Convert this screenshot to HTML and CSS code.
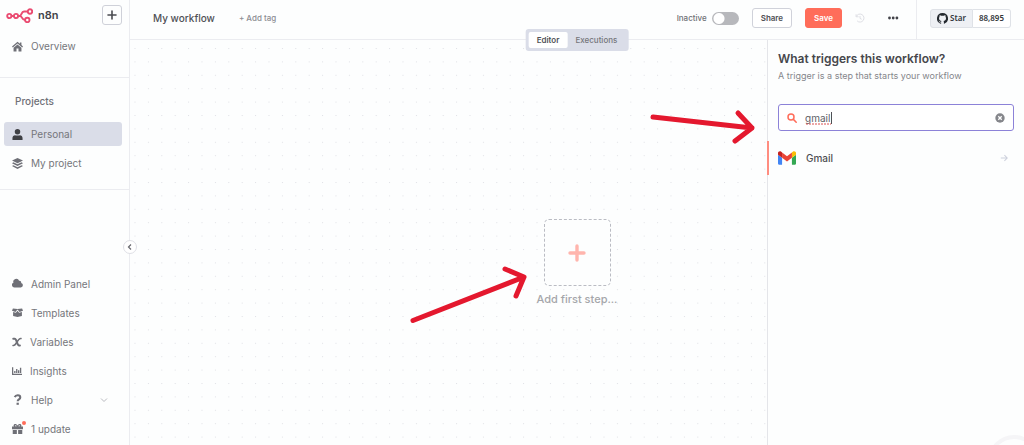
FILE: index.html
```html
<!DOCTYPE html>
<html lang="en">
<head>
<meta charset="utf-8">
<title>My workflow - n8n</title>
<link rel="stylesheet" href="styles.css">
</head>
<body>
<div class="app">
  <aside class="sidebar">
    <div class="brand">
      <svg class="brand-logo" viewBox="0 0 27 15" fill="none" stroke="#ea4b71" stroke-width="1.9" aria-hidden="true">
        <circle cx="3.300" cy="8" r="2.100"/><circle cx="10" cy="8" r="2.100"/><circle cx="24" cy="3.500" r="2.200"/><circle cx="21.300" cy="12" r="2.200"/>
        <path d="M5.300 8h2.700M12 8h1.600c2.400 0 1.400-4.500 4.400-4.500h3.800M14 8c2.400 0 1.400 4 5.100 4"/>
      </svg>
      <span class="brand-name">n8n</span>
      <button class="add-button" type="button" aria-label="Create"><svg viewBox="0 0 10 10" stroke="#4a4b50" stroke-width="1.6" stroke-linecap="round"><path d="M5 1v8M1 5h8"/></svg></button>
    </div>
    <nav class="nav nav-home">
      <a class="nav-item" href="#"><svg class="icon" viewBox="0 0 12 12" fill="#6f7077"><path d="M6 .8 0 5.900l.9 1.100L6 2.700 11.100 7l.9-1.100L10.300 4.400V1.500H8.600V3zM1.700 7.400 6 3.800l4.300 3.600v4.100H7.100V8.300H4.900v3.200H1.700z"/></svg>Overview</a>
    </nav>
    <nav class="nav nav-projects">
      <h2 class="nav-title">Projects</h2>
      <a class="nav-item active" href="#"><svg class="icon" viewBox="0 0 12 12" fill="#3f4045"><circle cx="6" cy="3.100" r="3"/><path d="M.5 12V9.700c0-1.700 1.200-3 3-3 .8.600 4.200.600 5 0 1.800 0 3 1.300 3 3V12z"/></svg>Personal</a>
      <a class="nav-item" href="#"><svg class="icon" viewBox="0 0 12 12" fill="#6f7077"><path d="M6 0l6 2.800-6 2.800-6-2.800zM1.500 4.700 6 6.800l4.500-2.100L12 5.600 6 8.600 0 5.600zM1.500 7.900 6 10l4.500-2.100 1.500.9-6 3.100-6-3.100z"/></svg>My project</a>
    </nav>
    <nav class="nav nav-bottom">
      <a class="nav-item" href="#"><svg class="icon" viewBox="0 0 12 12" fill="#6f7077"><path d="M2.600 10.300a2.700 2.700 0 0 1-1-5.200A3.200 3.200 0 0 1 7.700 3a2.100 2.100 0 0 1 2.300 2.400 2.500 2.500 0 0 1-.3 4.900z"/></svg>Admin Panel</a>
      <a class="nav-item" href="#"><svg class="icon" viewBox="0 0 12 12" fill="#6f7077"><path d="M1 1.500 6 2.200l5-.7 1 2.600-3.700 1.300L6 2.600 3.700 5.400 0 4.100zM1.200 5.400l3 1L6 4.200l1.800 2.200 3-1v4.300L6 11 1.200 9.700z"/></svg>Templates</a>
      <a class="nav-item" href="#"><svg class="icon narrow" viewBox="0 0 12 12" fill="none" stroke="#6f7077" stroke-linecap="round"><path d="M1.500 2h1.700c2.700 0 2.700 8.300 5.300 8.300h1" stroke-width="2.400"/><path d="M10.800 1.900C7 .6 5 11.400 1.200 10.100" stroke-width="1.800"/></svg>Variables</a>
      <a class="nav-item" href="#"><svg class="icon narrow" viewBox="0 0 12 12" fill="#6f7077"><path d="M0 1.500h1.500v7.700H12v1.500H0zM2.600 6h1.600v2.400H2.600zM4.900 3.600h1.600v4.800H4.900zM7.200 5h1.600v3.400H7.200zM9.500 2.200h1.600v6.200H9.500z"/></svg>Insights</a>
      <a class="nav-item" href="#"><svg class="icon" viewBox="0 0 12 12" fill="none" stroke="#6f7077" stroke-width="2.300"><path d="M3 3.400C4.100.6 9 .7 9 3.700c0 2.300-2.800 1.900-2.800 4.200"/><path d="M6.200 9.500v2.300" stroke-width="2.500"/></svg>Help<svg class="chevron" viewBox="0 0 8 8" fill="none" stroke="#b9bac0"><path d="m1 2.500 3 3 3-3"/></svg></a>
      <a class="nav-item" href="#"><span class="gift"><svg class="icon" viewBox="0 0 12 12" fill="#6f7077"><path fill-rule="evenodd" d="M0 3.800h2C.8 1.600 3.600-.6 6 2.700 8.400-.6 11.200 1.600 10 3.800h2v3H0zM3.200 3.500h2C4.600 2.300 3.300 1.600 3.200 3.500zM6.800 3.500h2C8.700 1.600 7.400 2.300 6.800 3.500zM.8 7.700h4.500V12H.8zM6.700 7.700h4.500V12H6.700z"/></svg><span class="badge"></span></span>1 update</a>
    </nav>
    <button class="collapse" type="button" aria-label="Collapse sidebar"><svg viewBox="0 0 8 8" fill="none" stroke="#66676d" stroke-width="1.200"><path d="M5 1.500 2.500 4 5 6.500"/></svg></button>
  </aside>

  <div class="workspace">
    <header class="topbar">
      <h1 class="workflow-name">My workflow</h1>
      <button class="add-tag" type="button">+ Add tag</button>
      <div class="actions">
        <label class="activation">Inactive<input class="switch" type="checkbox" role="switch"></label>
        <button class="button" type="button">Share</button>
        <button class="button primary" type="button">Save</button>
        <button class="icon-button history" type="button" aria-label="Workflow history"><svg viewBox="0 0 12 12" fill="none" stroke="#dedfe5" stroke-width="1.200"><path d="M1.300 1.500v3h3M1.500 4.300A4.800 4.800 0 1 1 2.600 9.500M6 3.500v3l2 1"/></svg></button>
        <button class="icon-button more" type="button" aria-label="More actions"><svg viewBox="0 0 12 12" fill="#424349"><circle cx="2.500" cy="6" r="1.400"/><circle cx="6.200" cy="6" r="1.400"/><circle cx="9.900" cy="6" r="1.400"/></svg></button>
      </div>
      <div class="github">
        <a class="star" href="#"><svg viewBox="0 0 16 16" fill="#24292f" aria-hidden="true"><path d="M8 0a8 8 0 0 0-2.530 15.590c.4.070.550-.170.550-.380v-1.490c-2.010.370-2.530-.490-2.690-.940-.090-.230-.480-.940-.820-1.130-.280-.150-.680-.520-.010-.530.630-.010 1.080.580 1.230.820.720 1.210 1.870.870 2.330.660.070-.520.280-.870.510-1.070-1.780-.200-3.640-.890-3.640-3.950 0-.870.310-1.590.820-2.150-.080-.200-.360-1.020.080-2.120 0 0 .670-.210 2.200.820a7.400 7.400 0 0 1 4 0c1.530-1.040 2.200-.820 2.200-.820.440 1.100.160 1.920.080 2.120.510.560.820 1.270.820 2.150 0 3.070-1.870 3.750-3.650 3.950.290.250.540.730.540 1.480v2.200c0 .210.150.460.550.380A8 8 0 0 0 8 0z"/></svg>Star</a>
        <a class="count" href="#">88,895</a>
      </div>
    </header>
    <div class="tabs">
      <button class="tab selected" type="button">Editor</button>
      <button class="tab" type="button">Executions</button>
    </div>
    <div class="stage">
      <main class="canvas">
        <svg class="grid" aria-hidden="true"><defs><pattern id="dots" width="20" height="20" patternUnits="userSpaceOnUse" patternTransform="translate(4.500 8) scale(.67)"><rect width="1.500" height="1.500" fill="#dfe0e5"/></pattern></defs><rect width="100%" height="100%" fill="url(#dots)"/></svg>
        <div class="first-step">
          <button class="step-box" type="button" aria-label="Add first step"><svg viewBox="0 0 18 18" stroke="#ffb5ad" stroke-width="3.400" stroke-linecap="round"><path d="M9 2v14M2 9h14"/></svg></button>
          <span class="step-label">Add first step...</span>
        </div>
      </main>
      <section class="panel">
        <h2 class="panel-title">What triggers this workflow?</h2>
        <p class="panel-text">A trigger is a step that starts your workflow</p>
        <div class="search">
          <svg viewBox="0 0 10 10" fill="none" stroke="#ff6d5a" stroke-width="1.500" stroke-linecap="round"><circle cx="4" cy="4" r="3"/><path d="m6.400 6.400 2.800 2.800"/></svg>
          <input class="search-input" type="text" value="gmail" aria-label="Search nodes">
          <svg class="squiggle" viewBox="0 0 25 2" stroke="#d95050" stroke-width="1" stroke-dasharray="2 1"><path d="M0 1h25"/></svg>
          <span class="caret"></span>
          <button class="clear" type="button" aria-label="Clear search"><svg viewBox="0 0 10 10"><circle cx="5" cy="5" r="4.700" fill="#85868b"/><path d="m3.300 3.300 3.400 3.400m0-3.400L3.300 6.700" stroke="#fff" stroke-width="1.300"/></svg></button>
        </div>
        <a class="result" href="#">
          <svg class="gmail" viewBox="52 42 88 66"><path fill="#4285f4" d="M58 108h14V74L52 59v43c0 3.300 2.700 6 6 6"/><path fill="#34a853" d="M120 108h14c3.300 0 6-2.700 6-6V59l-20 15"/><path fill="#fbbc04" d="M120 48v26l20-15v-8c0-7.400-8.500-11.600-14.400-7.200"/><path fill="#ea4335" d="M72 74V48l24 18 24-18v26L96 92"/><path fill="#c5221f" d="M52 51v8l20 15V48l-5.600-4.200C60.500 39.400 52 43.600 52 51"/></svg>
          <span>Gmail</span>
          <svg class="go" viewBox="0 0 10 10" fill="none" stroke="#ccd0dc" stroke-width="1.300"><path d="M1 5h8M5.500 1.500 9 5 5.500 8.500"/></svg>
        </a>
      </section>
      <span class="help-ring"></span>
    </div>
    <svg class="annotations" viewBox="130 0 894 445" fill="none" stroke="#e4182e" stroke-width="5" stroke-linecap="round" stroke-linejoin="round" aria-hidden="true">
      <path d="M653 117 752 128M738 113l14 15-17 13"/>
      <path d="M413 320.500 524 277M505 269l19 8-8 19"/>
    </svg>
  </div>
</div>
</body>
</html>
```
FILE: styles.css
```css
* { box-sizing: border-box; }
body { margin: 0; background: #fdfefe; color: #505156; font-family: Inter, "Liberation Sans", sans-serif; font-size: 10px; line-height: 14px; }
a { color: inherit; text-decoration: none; }
button { font: inherit; color: inherit; padding: 0; border: 0; background: none; }
h1, h2, p { margin: 0; }
svg { display: block; flex: none; }

.app { display: flex; min-height: 100vh; overflow: hidden; }

.sidebar { position: relative; z-index: 1; display: flex; flex-direction: column; flex: none; width: 130px; border-right: 1px solid #ebecf0; }
.brand { display: flex; align-items: center; height: 30px; padding: 0 7px 0 6px; }
.brand-logo { width: 27px; height: 15px; }
.brand-name { margin-left: 5px; color: #424349; font-size: 11px; font-weight: 600; }
.add-button { display: grid; place-items: center; width: 20px; height: 20px; margin-left: auto; border: 1px solid #cfd1d9; border-radius: 3px; }
.add-button svg { width: 10px; height: 10px; }
.nav { padding: 0 7px 0 4px; }
.nav-home { padding-top: 4px; padding-bottom: 19px; border-bottom: 1px solid #ebecf0; }
.nav-projects { padding-top: 16px; padding-bottom: 14px; border-bottom: 1px solid #ebecf0; }
.nav-bottom { margin-top: auto; padding-bottom: 2px; }
.nav-title { margin-bottom: 14px; padding-left: 11px; color: #6f7077; font-size: 10px; line-height: 14px; font-weight: 500; }
.nav-item { display: flex; align-items: center; gap: 8px; height: 24px; padding: 0 8px; border-radius: 3px; color: #75767b; font-size: 10px; }
.nav-item.active { margin-bottom: 5px; background: #dadde8; }
.nav-bottom .nav-item { height: 29px; padding-right: 14px; }
.icon { width: 11px; height: 11px; }
.icon.narrow { width: 10px; height: 10px; }
.chevron { width: 8px; height: 8px; margin-left: auto; }
.gift { position: relative; }
.badge { position: absolute; top: -2px; right: -3px; width: 4px; height: 4px; border-radius: 50%; background: #ff6d5a; }
.collapse { position: absolute; top: 240px; right: -8px; display: grid; place-items: center; width: 14px; height: 14px; border: 1px solid #dfe0e6; border-radius: 50%; background: #fff; }
.collapse svg { width: 8px; height: 8px; }

.workspace { position: relative; display: flex; flex: 1; flex-direction: column; min-width: 0; }
.topbar { display: flex; align-items: center; height: 40px; padding-left: 23px; padding-bottom: 3px; border-bottom: 1px solid #ebecf0; }
.workflow-name { color: #505156; font-size: 10px; font-weight: 500; }
.add-tag { margin-left: 24px; color: #8c8d93; font-size: 8px; font-weight: 500; }
.actions { display: flex; align-items: center; margin-left: auto; }
.activation { display: flex; align-items: center; gap: 5px; margin-right: 13px; color: #707176; font-size: 8px; font-weight: 500; }
.switch { appearance: none; width: 27px; height: 13px; margin: 0; border-radius: 7px; background: radial-gradient(circle at 7px 50%, #fff 5px, #b7b8bc 6px); }
.button { height: 20px; padding: 0 8px; border: 1px solid #d0d2da; border-radius: 3px; background: #fff; font-size: 8px; font-weight: 600; }
.button.primary { margin-left: 13px; border-color: #ff6d5a; background: #ff6d5a; color: #fff; }
.icon-button svg { width: 12px; height: 12px; }
.history svg { width: 10px; height: 10px; }
.history { margin-left: 13px; }
.more { margin-left: 22px; }
.github { display: flex; align-self: stretch; align-items: center; margin: 0 0 -3px 17px; padding: 0 13px 3px; border-left: 1px solid #ebecf0; color: #34373c; font: 600 8px/14px "Noto Sans", sans-serif; }
.star, .count { display: flex; align-items: center; height: 19px; border: 1px solid #dfe2e7; }
.star { gap: 2px; padding: 0 6px; border-radius: 3px 0 0 3px; background: #eef0f4; }
.star svg { width: 11px; height: 11px; }
.count { padding: 0 6px; border-left: 0; border-radius: 0 3px 3px 0; background: #fff; }

.tabs { position: absolute; z-index: 1; top: 29px; left: 50%; display: flex; transform: translateX(-50%); padding: 3px; border-radius: 3px; background: #dadde8; }
.tab { height: 16px; padding: 0 8px; border-radius: 2px; color: #75767b; font-size: 8px; font-weight: 500; }
.tab.selected { background: #fff; color: #505156; font-weight: 600; }

.stage { position: relative; display: flex; flex: 1; overflow: hidden; }
.canvas { position: relative; flex: 1; min-width: 0; }
.grid { position: absolute; inset: 0; width: 100%; height: 100%; }
.first-step { position: absolute; top: 179px; left: 397px; width: 100px; display: flex; flex-direction: column; align-items: center; gap: 6px; }
.step-box { display: grid; place-items: center; width: 67px; height: 67px; border: 1px dashed #babcc3; border-radius: 5px; background: #fdfefe; }
.step-box svg { width: 18px; height: 18px; }
.step-label { color: #a5a6aa; font-size: 11px; font-weight: 500; white-space: nowrap; }

.panel { flex: none; width: 257px; padding: 11px 10px 0; border-left: 1px solid #e4e5e9; background: #fdfefe; }
.panel-title { color: #46474c; font-size: 12px; line-height: 16px; font-weight: 600; }
.panel-text { margin-top: 2px; color: #85868b; font-size: 9px; }
.search { position: relative; display: flex; align-items: center; height: 27px; margin-top: 21px; padding: 0 8px; border: 1px solid #8c82d8; border-radius: 3px; background: #fff; }
.search svg { width: 10px; height: 10px; }
.search-input { flex: 1; min-width: 0; margin-left: 8px; padding: 0; border: 0; outline: 0; background: transparent; color: #606166; font: inherit; }
.search .squiggle { position: absolute; top: 18px; left: 27px; width: 25px; height: 2px; }
.caret { position: absolute; top: 7px; left: 52px; width: 1px; height: 12px; background: #505156; }
.result { display: flex; align-items: center; height: 34px; margin: 10px -10px 0 -11px; padding: 0 16px 0 9px; border-left: 2px solid #ff8d80; color: #4d4e53; font-weight: 500; }
.gmail { width: 18px; height: 14px; margin-right: 10px; }
.go { width: 8px; height: 8px; margin-left: auto; }
.help-ring { position: absolute; right: -16px; bottom: -42px; width: 52px; height: 52px; border: 4px solid #f5f5f7; border-radius: 50%; }

.annotations { position: absolute; inset: 0; width: 100%; height: 100%; pointer-events: none; }
```
